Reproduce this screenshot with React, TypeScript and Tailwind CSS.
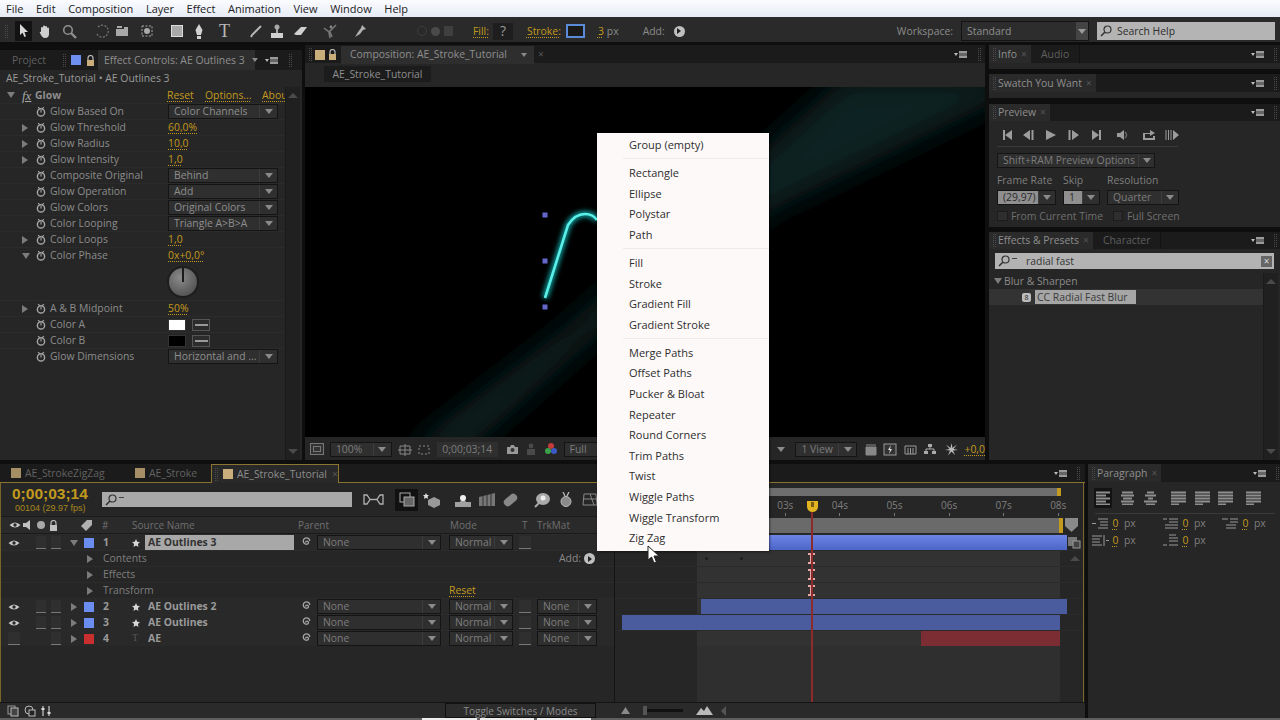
import type { ReactNode } from "react";

const GOLD = "text-[#c29a1e] underline decoration-dotted underline-offset-2";

function Ic({ w = 14, h = 14, className = "", children }: { w?: number; h?: number; className?: string; children: ReactNode }) {
  return (
    <svg viewBox={`0 0 ${w} ${h}`} width={w} height={h} className={`shrink-0 ${className}`}>
      {children}
    </svg>
  );
}

function Grip({ className = "" }: { className?: string }) {
  return <div className={`w-[3px] h-[13px] shrink-0 border-x border-dotted border-[#4a4a4a] ${className}`} />;
}

function PanelMenu() {
  return (
    <div className="flex items-center gap-[1px] shrink-0">
      <div className="w-0 h-0 border-x-[2px] border-x-transparent border-t-[3px] border-t-[#bbb]" />
      <div className="w-[8px] h-[7px] border-y-2 border-[#9a9a9a] bg-[#666]" />
    </div>
  );
}

function Arrow({ open = false, className = "" }: { open?: boolean; className?: string }) {
  return open ? (
    <div className={`w-0 h-0 border-x-[4px] border-x-transparent border-t-[6px] border-t-[#7c7c7c] ${className}`} />
  ) : (
    <div className={`w-0 h-0 border-y-[4px] border-y-transparent border-l-[6px] border-l-[#7c7c7c] ${className}`} />
  );
}

function Drop({ label, w, arrowW = 18, dim = false, fill = 0 }: { label: string; w: number; arrowW?: number; dim?: boolean; fill?: number }) {
  return (
    <div
      className={`h-[15px] flex items-center shrink-0 border border-[#141414] bg-[#2f2f2f] ${dim ? "text-[#7d7d7d]" : "text-[#8e8e8e]"}`}
      style={{ width: w }}
    >
      <div
        className="flex-1 min-w-0 h-full pl-[5px] flex items-center whitespace-nowrap overflow-hidden leading-none"
        style={fill ? { background: `linear-gradient(to right,#8f8f8f ${fill}px,transparent ${fill}px)`, color: "#2a2a2a" } : undefined}
      >
        {label}
      </div>
      <div className="flex justify-center items-center h-full border-l border-[#3c3c3c]" style={{ width: arrowW }}>
        <div className="w-0 h-0 border-x-[4px] border-x-transparent border-t-[5px] border-t-[#8a8a8a]" />
      </div>
    </div>
  );
}

function Stopwatch() {
  return (
    <Ic w={10} h={11}>
      <circle cx="5" cy="6.4" r="3.6" fill="none" stroke="#a5a5a5" strokeWidth="1.4" />
      <path d="M2 1.2 L4 2.6 M8 1.2 L6 2.6 M5 6.4 L5 4" stroke="#a5a5a5" strokeWidth="1.1" />
    </Ic>
  );
}

type FxRow = {
  label: string;
  arrow?: boolean;
  open?: boolean;
  drop?: string;
  val?: string;
  swatch?: string;
};

const FX_ROWS: FxRow[] = [
  { label: "Glow Based On", drop: "Color Channels" },
  { label: "Glow Threshold", arrow: true, val: "60,0%" },
  { label: "Glow Radius", arrow: true, val: "10,0" },
  { label: "Glow Intensity", arrow: true, val: "1,0" },
  { label: "Composite Original", drop: "Behind" },
  { label: "Glow Operation", drop: "Add" },
  { label: "Glow Colors", drop: "Original Colors" },
  { label: "Color Looping", drop: "Triangle A>B>A" },
  { label: "Color Loops", arrow: true, val: "1,0" },
  { label: "Color Phase", arrow: true, open: true, val: "0x+0,0°" },
  { label: "A & B Midpoint", arrow: true, val: "50%" },
  { label: "Color A", swatch: "#ffffff" },
  { label: "Color B", swatch: "#000000" },
  { label: "Glow Dimensions", drop: "Horizontal and ..." },
];

function EffectRow({ r }: { r: FxRow }) {
  return (
    <>
      <div className="h-[16px] flex items-center border-t border-[#2b2b2b]">
        <div className="w-[36px] pl-[22px] shrink-0 flex items-center">{r.arrow && <Arrow open={r.open} />}</div>
        <div className="w-[14px] shrink-0 flex items-center">
          <Stopwatch />
        </div>
        <div className="w-[118px] shrink-0 text-[#8c8c8c] whitespace-nowrap leading-none">{r.label}</div>
        {r.drop && <Drop label={r.drop} w={110} />}
        {r.val && <span className={`${GOLD} leading-none`}>{r.val}</span>}
        {r.swatch && (
          <div className="flex items-center gap-[6px]">
            <div className="w-[18px] h-[12px] border border-[#333]" style={{ background: r.swatch }} />
            <div className="w-[18px] h-[12px] border border-[#555] bg-[#2c2c2c] flex items-center justify-center">
              <div className="w-[13px] h-[2px] bg-[#999]" />
            </div>
          </div>
        )}
      </div>
      {r.open && (
        <div className="h-[37px] flex items-center pl-[167px]">
          <div className="w-[32px] h-[32px] rounded-full border-2 border-[#1d1d1d] bg-[radial-gradient(circle_at_40%_35%,#8a8a8a,#555_75%)] flex justify-center">
            <div className="w-[2px] h-[14px] bg-[#1a1a1a]" />
          </div>
        </div>
      )}
    </>
  );
}

function EffectControls() {
  return (
    <div className="w-[302px] h-[410px] bg-[#262626] flex flex-col shrink-0 mt-[8px]">
      <div className="h-[20px] bg-[#1b1b1b] flex items-center shrink-0">
        <span className="ml-[12px] w-[51px] text-[#5f5f5f] leading-none">Project</span>
        <Grip />
        <div className="w-[10px] h-[10px] bg-[#6f8ff0] ml-[5px]" />
        <Ic w={9} h={11} className="ml-[5px]">
          <path d="M2 5 V3 a2.5 2.5 0 0 1 5 0 V5" fill="none" stroke="#bbb" strokeWidth="1.2" />
          <rect x="1" y="5" width="7" height="6" fill="#c9ad7a" />
        </Ic>
        <div className="ml-[3px] h-[20px] w-[157px] bg-[#2e2e2e] flex items-center pl-[6px] text-[#8e8e8e] whitespace-nowrap leading-none">
          Effect Controls: AE Outlines 3
          <div className="ml-[7px] w-0 h-0 border-x-[3px] border-x-transparent border-t-[4px] border-t-[#8a8a8a]" />
        </div>
        <div className="ml-[10px]">
          <PanelMenu />
        </div>
        <Grip className="ml-[11px]" />
      </div>
      <div className="h-[17px] pb-[1px] flex items-center pl-[6px] text-[#9a9a9a] leading-none whitespace-nowrap">
        AE_Stroke_Tutorial • AE Outlines 3
      </div>
      <div className="flex-1 flex min-h-0">
        <div className="flex-1 min-w-0">
          <div className="h-[16px] flex items-center">
            <div className="w-[22px] pl-[7px] shrink-0">
              <Arrow open />
            </div>
            <span className="w-[13px] italic font-['Liberation_Serif',serif] text-[13px] text-[#a8a8a8] underline leading-none">fx</span>
            <span className="w-[132px] font-bold text-[#8e8e8e] leading-none">Glow</span>
            <span className={`${GOLD} w-[38px] leading-none`}>Reset</span>
            <span className={`${GOLD} w-[57px] leading-none whitespace-nowrap`}>Options...</span>
            <span className={`${GOLD} leading-none w-[22px]`}>Abou</span>
          </div>
          {FX_ROWS.map((r) => (
            <EffectRow key={r.label} r={r} />
          ))}
        </div>
        <ScrollBar />
      </div>
    </div>
  );
}

function ScrollBar() {
  return (
    <div className="w-[15px] mr-[2px] shrink-0 bg-[#202020] border-l border-[#1a1a1a] flex flex-col items-center justify-between py-[6px]">
      <div className="w-0 h-0 border-x-[5px] border-x-transparent border-b-[5px] border-b-[#4a4a4a]" />
      <div className="w-0 h-0 border-x-[5px] border-x-transparent border-t-[5px] border-t-[#4a4a4a]" />
    </div>
  );
}

function Viewer() {
  return (
    <svg viewBox="0 0 680 350" width={680} height={350} className="block bg-black shrink-0">
      <defs>
        <filter id="soft" x="-20%" y="-20%" width="140%" height="140%">
          <feGaussianBlur stdDeviation="14" />
        </filter>
        <filter id="glow" x="-50%" y="-50%" width="200%" height="200%">
          <feGaussianBlur stdDeviation="2.5" />
        </filter>
      </defs>
      <path d="M100 365 L258 243 L540 -10 L700 -10 L700 10 L470 122 L295 245 L160 365 Z" fill="#0a2223" filter="url(#soft)" />
      <path d="M240 211 L263 138 Q270 127 280 127 Q288 127 292 133" fill="none" stroke="#19c8c8" strokeWidth="6" filter="url(#glow)" opacity="0.8" />
      <path d="M240 211 L263 138 Q270 127 280 127 Q288 127 292 133" fill="none" stroke="#5af0e8" strokeWidth="2.6" />
      {[128, 174, 220].map((y) => (
        <rect key={y} x={237.5} y={y - 2.5} width={5} height={5} fill="#6466cc" />
      ))}
    </svg>
  );
}

function CompFooter() {
  return (
    <div className="h-[18px] mt-[3px] flex items-center text-[#777] leading-none">
      <div className="ml-[5px] w-[14px] h-[12px] border border-[#777] bg-[#333] flex items-center justify-center">
        <div className="w-[8px] h-[6px] border border-[#777]" />
      </div>
      <div className="ml-[6px]">
        <Drop label="100%" w={62} dim />
      </div>
      <Ic w={14} h={13} className="ml-[6px]">
        <path d="M2 3 H12 V11 H2 Z M7 1 V13 M0 7 H14" fill="none" stroke="#888" />
      </Ic>
      <Ic w={14} h={13} className="ml-[5px]">
        <path d="M2 3 H12 V11 H2 Z" fill="none" stroke="#888" strokeDasharray="2 2" />
      </Ic>
      <div className="ml-[6px] w-[61px] h-[15px] bg-[#2f2f2f] flex items-center justify-center text-[#7d7d7d]">0;00;03;14</div>
      <Ic w={13} h={11} className="ml-[8px]">
        <path d="M1 3 H4 L5 1 H8 L9 3 H12 V10 H1 Z" fill="#999" />
        <circle cx="6.5" cy="6" r="2" fill="#333" />
      </Ic>
      <Ic w={10} h={12} className="ml-[7px]">
        <circle cx="5" cy="3" r="2.4" fill="#4a4a4a" />
        <rect x="1" y="6" width="8" height="6" fill="#4a4a4a" />
      </Ic>
      <Ic w={14} h={14} className="ml-[8px]">
        <circle cx="7" cy="4" r="3" fill="#c63a3a" />
        <circle cx="4" cy="9" r="3" fill="#3aa04a" />
        <circle cx="10" cy="9" r="3" fill="#3a5ac6" />
      </Ic>
      <div className="ml-[6px]">
        <Drop label="Full" w={60} dim />
      </div>
      <div className="w-[143px]" />
      <div className="w-[30px] flex justify-center">
        <div className="w-0 h-0 border-x-[4px] border-x-transparent border-t-[5px] border-t-[#8a8a8a]" />
      </div>
      <Drop label="1 View" w={62} dim />
      <Ic w={14} h={13} className="ml-[7px]">
        <path d="M2 2 H12 M2 4 H12 V12 H2 Z" fill="#888" stroke="#888" />
      </Ic>
      <Ic w={14} h={13} className="ml-[5px]">
        <rect x="1" y="1" width="12" height="11" fill="#333" stroke="#999" />
        <path d="M8 2 L5 7 H7 L6 11 L9 6 H7 Z" fill="#ddd" />
      </Ic>
      <Ic w={13} h={12} className="ml-[7px]">
        <path d="M1 3 H12 V11 H1 Z M4 5 V11 M6.5 5 V11 M9 5 V11" fill="none" stroke="#999" />
      </Ic>
      <Ic w={14} h={12} className="ml-[6px]">
        <path d="M5 1 H9 V4 H5 Z M1 8 H5 V11 H1 Z M9 8 H13 V11 H9 Z" fill="#aaa" />
        <path d="M7 4 V6 M3 8 V6 H11 V8" fill="none" stroke="#aaa" />
      </Ic>
      <Ic w={15} h={15} className="ml-[7px]">
        <path d="M7.5 1 L8.5 6 L13 2.5 L9.5 7 L14 8 L9 8.5 L11 13 L7.5 9.5 L4 13.5 L6 8.5 L1 8 L5.5 7 L2 2.5 L6.5 6 Z" fill="#bbb" />
      </Ic>
      <span className={`ml-[5px] ${GOLD}`}>+0,0</span>
    </div>
  );
}

function CompPanel() {
  return (
    <div className="ml-[3px] w-[680px] h-[415px] shrink-0 mt-[3px] bg-[#262626] flex flex-col">
      <div className="h-[18px] pt-[1px] bg-[#1b1b1b] flex items-center shrink-0">
        <Grip className="ml-[4px]" />
        <div className="w-[10px] h-[10px] bg-[#c9ad7a] ml-[3px]" />
        <Ic w={9} h={11} className="ml-[3px]">
          <path d="M2 5 V3 a2.5 2.5 0 0 1 5 0 V5" fill="none" stroke="#bbb" strokeWidth="1.2" />
          <rect x="1" y="5" width="7" height="6" fill="#c9ad7a" />
        </Ic>
        <div className="ml-[4px] h-[18px] w-[193px] bg-[#2e2e2e] flex items-center pl-[9px] text-[#8e8e8e] leading-none whitespace-nowrap">
          Composition: AE_Stroke_Tutorial
          <div className="ml-[14px] w-0 h-0 border-x-[3px] border-x-transparent border-t-[4px] border-t-[#8a8a8a]" />
        </div>
        <span className="ml-[4px] text-[#555] leading-none">×</span>
        <div className="flex-1" />
        <PanelMenu />
        <Grip className="ml-[11px] mr-[4px]" />
      </div>
      <div className="h-[24px] flex items-start pt-[3px] pl-[19px] shrink-0">
        <div className="h-[16px] w-[107px] bg-[#1c1c1c] flex items-center justify-center text-[#8e8e8e] leading-none">AE_Stroke_Tutorial</div>
      </div>
      <Viewer />
      <CompFooter />
    </div>
  );
}

function Tab({ label, active = true }: { label: string; active?: boolean }) {
  return (
    <div className={`h-full flex items-center px-[4px] leading-none whitespace-nowrap ${active ? "bg-[#2a2a2a] text-[#8e8e8e]" : "text-[#5f5f5f] pl-[10px] pr-[10px] border-r border-[#111]"}`}>
      {active && <Grip className="mr-[2px]" />}
      {label}
      {active && <span className="ml-[4px] text-[#555]">×</span>}
    </div>
  );
}

function TabBar({ children, h = 18 }: { children: ReactNode; h?: number }) {
  return (
    <div className="bg-[#1b1b1b] flex items-center shrink-0" style={{ height: h }}>
      {children}
      <div className="flex-1" />
      <PanelMenu />
      <Grip className="ml-[10px] mr-[3px]" />
    </div>
  );
}

function PreviewButtons() {
  const c = "#9c9c9c";
  return (
    <div className="h-[20px] flex items-center ml-[8px] w-[181px]">
      <Ic w={11} h={10} className="ml-[5px]">
        <path d="M1 0 H3 V10 H1 Z M10 0 V10 L3 5 Z" fill={c} />
      </Ic>
      <Ic w={12} h={10} className="ml-[9px]">
        <path d="M8 0 V10 L1 5 Z M9.5 0 H11.5 V10 H9.5 Z" fill={c} />
      </Ic>
      <Ic w={10} h={10} className="ml-[12px]">
        <path d="M0 0 L10 5 L0 10 Z" fill={c} />
      </Ic>
      <Ic w={12} h={10} className="ml-[12px]">
        <path d="M0.5 0 H2.5 V10 H0.5 Z M4 0 L11 5 L4 10 Z" fill={c} />
      </Ic>
      <Ic w={11} h={10} className="ml-[11px]">
        <path d="M1 0 L8 5 L1 10 Z M8 0 H10 V10 H8 Z" fill={c} />
      </Ic>
      <Ic w={13} h={12} className="ml-[14px]">
        <path d="M1 4 H4 L8 1 V11 L4 8 H1 Z" fill={c} />
        <path d="M9 3 Q12 6 9 9" fill="none" stroke="#666" strokeWidth="1.5" />
      </Ic>
      <Ic w={14} h={12} className="ml-[13px]">
        <path d="M1 4 H8 V1 L13 4 L8 7 V5 H3 V9 H11 V7 H13 V11 H1 Z" fill={c} />
      </Ic>
      <Ic w={14} h={10} className="ml-[9px]">
        <path d="M0.5 0 H1.5 V10 H0.5 Z M3 0 H4 V10 H3 Z M5.5 0 H6.5 V10 H5.5 Z M8 0 L14 5 L8 10 Z" fill={c} />
      </Ic>
    </div>
  );
}

function PreviewPanel() {
  return (
    <div className="h-[123px] mt-[6px] bg-[#262626] flex flex-col text-[#8a8a8a]">
      <TabBar h={17}>
        <Tab label="Preview" />
      </TabBar>
      <div className="mt-[4px]">
        <PreviewButtons />
      </div>
      <div className="ml-[8px] w-[181px] h-[1px] bg-[#3a3a3a] mt-[1px]" />
      <div className="mt-[6px] ml-[8px]">
        <Drop label="Shift+RAM Preview Options" w={158} arrowW={16} dim />
      </div>
      <div className="flex ml-[8px] mt-[5px] h-[14px] items-center leading-none text-[#7f7f7f]">
        <span className="w-[66px]">Frame Rate</span>
        <span className="w-[44px]">Skip</span>
        <span>Resolution</span>
      </div>
      <div className="flex ml-[8px] mt-[3px] items-center">
        <Drop label="(29,97)" w={59} arrowW={17} fill={41} />
        <div className="ml-[7px]">
          <Drop label="1" w={37} arrowW={17} fill={19} />
        </div>
        <div className="ml-[7px]">
          <Drop label="Quarter" w={72} arrowW={17} dim />
        </div>
      </div>
      <div className="flex ml-[8px] mt-[4px] h-[14px] items-center leading-none text-[#6f6f6f]">
        <div className="w-[11px] h-[10px] bg-[#2e2e2e] border border-[#1c1c1c]" />
        <span className="ml-[3px] w-[102px]">From Current Time</span>
        <div className="w-[10px] h-[10px] bg-[#2e2e2e] border border-[#1c1c1c]" />
        <span className="ml-[4px]">Full Screen</span>
      </div>
    </div>
  );
}

function SearchGlyph() {
  return (
    <Ic w={12} h={12}>
      <circle cx="7.5" cy="4.5" r="3.5" fill="none" stroke="#333" strokeWidth="1.2" />
      <path d="M5 7 L1 11" stroke="#333" strokeWidth="1.6" />
    </Ic>
  );
}

function EffectsPanel() {
  return (
    <div className="flex-1 mt-[5px] bg-[#262626] flex flex-col text-[#8a8a8a]">
      <TabBar h={17}>
        <Tab label="Effects & Presets" />
        <Tab label="Character" active={false} />
      </TabBar>
      <div className="mx-[6px] mt-[4px] h-[16px] bg-[#b3b3b3] flex items-center pl-[3px] pr-[2px] text-[#333] leading-none">
        <SearchGlyph />
        <div className="ml-[2px] w-[5px] h-[1px] bg-[#444] mb-[5px]" />
        <span className="ml-[9px]">radial fast</span>
        <div className="flex-1" />
        <div className="w-[11px] h-[11px] bg-[#666] text-[#ddd] flex items-center justify-center text-[10px]">×</div>
      </div>
      <div className="flex-1 flex min-h-0 mt-[4px]">
        <div className="flex-1 min-w-0">
          <div className="h-[16px] flex items-center pl-[5px] leading-none">
            <Arrow open className="mr-[2px]" />
            Blur &amp; Sharpen
          </div>
          <div className="h-[16px] flex items-center bg-[#333] pl-[33px] leading-none">
            <div className="w-[9px] h-[9px] rounded-[2px] bg-[#bbb] flex items-center justify-center text-[7px] text-[#222]">8</div>
            <div className="ml-[4px] h-[14px] w-[101px] bg-[#a6a6a6] flex items-center pl-[2px] text-[#3a3a3a]">CC Radial Fast Blur</div>
          </div>
        </div>
        <ScrollBar />
      </div>
    </div>
  );
}

function RightColumn() {
  return (
    <div className="ml-[4px] flex-1 flex flex-col mt-[3px] h-[415px]">
      <div className="h-[24px] bg-[#262626]">
        <TabBar>
          <Tab label="Info" />
          <Tab label="Audio" active={false} />
        </TabBar>
      </div>
      <div className="h-[24px] mt-[5px] bg-[#262626]">
        <TabBar>
          <Tab label="Swatch You Want" />
        </TabBar>
      </div>
      <PreviewPanel />
      <EffectsPanel />
    </div>
  );
}

function Toolbar() {
  const s = "#b5b5b5";
  return (
    <div className="h-[25px] pt-[3px] bg-[#2a2a2a] flex items-center text-[#8a8a8a] leading-none shrink-0">
      <Grip className="ml-[5px]" />
      <div className="ml-[7px] w-[17px] h-[20px] bg-[#131313] flex items-center justify-center">
        <Ic w={10} h={14}>
          <path d="M1 0 L1 11 L3.6 8.8 L5.4 13 L7 12.2 L5.4 8 L9 8 Z" fill="#d8d8d8" />
        </Ic>
      </div>
      <Ic w={14} h={15} className="ml-[6px]">
        <path d="M3 8 V4 a1 1 0 0 1 2 0 V2.5 a1 1 0 0 1 2 0 V3 a1 1 0 0 1 2 0 V4.5 a1 1 0 0 1 2 0 V10 Q11 14 7 14 Q4 14 2 9 Q1 7 3 8 Z" fill="#cfcfcf" />
      </Ic>
      <Ic w={15} h={15} className="ml-[10px]">
        <circle cx="6" cy="6" r="4.3" fill="none" stroke="#8f8f8f" strokeWidth="1.6" />
        <path d="M9 9 L14 14" stroke="#8f8f8f" strokeWidth="2.4" />
      </Ic>
      <Ic w={14} h={14} className="ml-[18px]">
        <path d="M3 3 A6 6 0 1 1 2 10" fill="none" stroke="#777" strokeWidth="1.2" strokeDasharray="2 1.4" />
      </Ic>
      <Ic w={14} h={12} className="ml-[6px]">
        <path d="M1 4 H9 V2 H13 V11 H1 Z" fill="#a8a8a8" />
        <rect x="2" y="1" width="5" height="2" fill="#a8a8a8" />
      </Ic>
      <Ic w={14} h={14} className="ml-[11px]">
        <rect x="2" y="2" width="10" height="10" fill="none" stroke="#aaa" strokeDasharray="2 1.5" />
        <circle cx="7" cy="7" r="3" fill="#aaa" />
      </Ic>
      <Ic w={12} h={13} className="ml-[17px]">
        <rect x="0.5" y="0.5" width="11" height="11" fill="#a9a9a9" stroke="#ddd" />
      </Ic>
      <Ic w={10} h={15} className="ml-[11px]">
        <path d="M5 0 L8.5 6 L7 11 H3 L1.5 6 Z" fill="#d2d2d2" />
        <rect x="3" y="12" width="4" height="3" fill="#d2d2d2" />
      </Ic>
      <span className="ml-[15px] w-[16px] font-['Liberation_Serif',serif] text-[18px] text-[#b8b8b8]">T</span>
      <Ic w={13} h={13} className="ml-[14px]">
        <path d="M12 1 L3 10 L2 12" stroke={s} strokeWidth="2" fill="none" />
      </Ic>
      <Ic w={14} h={15} className="ml-[8px]">
        <circle cx="7" cy="3" r="2.5" fill="#a8a8a8" />
        <rect x="6" y="5" width="2" height="4" fill="#a8a8a8" />
        <rect x="1" y="9" width="12" height="5" fill="#d0d0d0" />
      </Ic>
      <Ic w={15} h={11} className="ml-[9px]">
        <path d="M1 8 L8 1 H14 L8 9 H3 Z" fill="#d0d0d0" />
      </Ic>
      <Ic w={15} h={15} className="ml-[15px]">
        <path d="M7 14 L6 8 L1 4 M6 8 L11 3 L13 1 M7 8 L9 13" stroke="#777" strokeWidth="1.6" fill="none" />
        <circle cx="8" cy="3" r="1.4" fill="#888" />
      </Ic>
      <Ic w={14} h={15} className="ml-[15px]">
        <path d="M9 1 L13 5 L10 6 L7 10 L2 13 L5 8 L8 4 Z" fill="#b0b0b0" />
      </Ic>
      <div className="ml-[50px] flex items-center gap-[4px]">
        <div className="w-[10px] h-[10px] rounded-full border border-[#3d3d3d]" />
        <div className="w-[9px] h-[9px] rounded-full bg-[#4a4a4a]" />
        <div className="w-[9px] h-[10px] bg-[#3f3f3f]" />
      </div>
      <span className={`ml-[20px] ${GOLD}`}>Fill:</span>
      <div className="ml-[4px] w-[20px] h-[17px] bg-[#1e1e1e] flex items-center justify-center text-[14px] text-[#999]">?</div>
      <span className={`ml-[14px] ${GOLD}`}>Stroke:</span>
      <div className="ml-[5px] w-[19px] h-[14px] border-2 border-[#5a8ad8] bg-[#1a1a1a]" />
      <span className={`ml-[13px] ${GOLD}`}>3</span>
      <span className="ml-[3px] text-[#8a8a8a]">px</span>
      <span className="ml-[24px] text-[#8a8a8a] w-[31px]">Add:</span>
      <div className="w-[11px] h-[11px] rounded-full bg-[#c0c0c0] flex items-center justify-center">
        <div className="w-0 h-0 border-y-[3px] border-y-transparent border-l-[4px] border-l-[#222]" />
      </div>
      <div className="flex-1" />
      <span className="text-[#8a8a8a]">Workspace:</span>
      <div className="ml-[8px]">
        <div className="w-[128px] h-[20px] bg-[#2d2d2d] border border-[#141414] flex items-center text-[#8e8e8e] pl-[5px]">
          Standard
          <div className="flex-1" />
          <div className="w-[12px] h-full bg-[#444] flex items-center justify-center">
            <div className="w-0 h-0 border-x-[4px] border-x-transparent border-t-[5px] border-t-[#999]" />
          </div>
        </div>
      </div>
      <div className="ml-[8px] mr-[5px] w-[178px] h-[18px] bg-[#b4b4b4] flex items-center pl-[3px] text-[#2c2c2c]">
        <SearchGlyph />
        <span className="ml-[5px]">Search Help</span>
      </div>
    </div>
  );
}

type Layer = { n: number; name: string; color: string; sel?: boolean; eye?: boolean; shape?: boolean };

function Eye() {
  return (
    <Ic w={12} h={8}>
      <path d="M0.5 4 Q6 -1 11.5 4 Q6 9 0.5 4 Z" fill="#c8c8c8" />
      <circle cx="6" cy="4" r="1.7" fill="#2a2a2a" />
    </Ic>
  );
}

function Spiral() {
  return (
    <Ic w={11} h={11}>
      <path d="M5.5 5.5 a1.5 1.5 0 1 1 1.8 1.6 a3.2 3.2 0 1 1 2.4 -3.2" fill="none" stroke="#a8a8a8" strokeWidth="1.3" />
    </Ic>
  );
}

function Switch({ w = 10 }: { w?: number }) {
  return <div className="h-[13px] bg-[#2f2f2f] border-b border-[#777] shrink-0" style={{ width: w }} />;
}

function LayerRow({ l }: { l: Layer }) {
  return (
    <div className="h-[16px] flex items-center border-t border-[#2b2b2b] bg-[#292929] leading-none">
      <div className="w-[35px] pl-[7px] shrink-0 flex items-center">{l.eye ? <Eye /> : <Switch w={12} />}</div>
      {l.eye ? <Switch /> : <div className="w-[10px]" />}
      <div className="w-[5px]" />
      <Switch />
      <div className="ml-[7px] w-[12px] flex justify-center">
        <Arrow open={l.sel} />
      </div>
      <div className="w-[10px] h-[10px] shrink-0 ml-[4px]" style={{ background: l.color }} />
      <div className="w-[19px] ml-[2px] pl-[7px] font-bold text-[#9a9a9a] shrink-0">{l.n}</div>
      <div className="w-[30px] pl-[17px] flex shrink-0">
        {l.shape ? (
          <Ic w={8} h={8}>
            <path d="M4 0 L5.2 2.8 L8 3 L5.9 5 L6.5 8 L4 6.4 L1.5 8 L2.1 5 L0 3 L2.8 2.8 Z" fill="#d8d8d8" />
          </Ic>
        ) : (
          <span className="text-[#555] font-['Liberation_Serif',serif]">T</span>
        )}
      </div>
      <div className={`w-[149px] h-[15px] flex items-center pl-[3px] font-bold shrink-0 ${l.sel ? "bg-[#a8a8a8] text-[#333]" : "text-[#9a9a9a]"}`}>{l.name}</div>
      <div className="w-[23px] flex justify-center shrink-0">
        <Spiral />
      </div>
      <Drop label="None" w={124} dim />
      <div className="ml-[8px]">
        <Drop label="Normal" w={64} dim />
      </div>
      <div className="ml-[6px]">
        <Switch w={12} />
      </div>
      {!l.sel && (
        <div className="ml-[6px]">
          <Drop label="None" w={60} dim />
        </div>
      )}
    </div>
  );
}

const LAYERS: Layer[] = [
  { n: 2, name: "AE Outlines 2", color: "#6b8df0", eye: true, shape: true },
  { n: 3, name: "AE Outlines", color: "#6b8df0", eye: true, shape: true },
  { n: 4, name: "AE", color: "#c83030" },
];

function Sub({ label, extra }: { label: string; extra?: ReactNode }) {
  return (
    <div className="h-[16px] flex items-center border-t border-[#2b2b2b] leading-none text-[#7f7f7f]">
      <div className="w-[102px] pl-[86px] shrink-0">
        <Arrow />
      </div>
      <span className="w-[346px] shrink-0">{label}</span>
      {extra}
    </div>
  );
}

function TimelineHeader() {
  const c = "#b0b0b0";
  return (
    <div className="h-[33px] flex items-center bg-[#262626]">
      <div className="w-[101px] pl-[11px] shrink-0 font-['Liberation_Sans',sans-serif]">
        <div className="text-[15.5px] font-bold text-[#c29a1e] leading-[18px]">0;00;03;14</div>
        <div className="text-[9px] text-[#a8881e] leading-[11px] pl-[3px] whitespace-nowrap">00104 (29.97 fps)</div>
      </div>
      <div className="w-[250px] h-[15px] bg-[#a9a9a9] flex items-center pl-[3px]">
        <SearchGlyph />
        <div className="ml-[2px] w-[5px] h-[1px] bg-[#444] mb-[5px]" />
      </div>
      <Ic w={24} h={13} className="ml-[11px]">
        <path d="M1 2 H4 L7 6.5 L4 11 H1 Z M17 2 H20 V11 H17 L14 6.5 Z" fill="none" stroke={c} strokeWidth="1.3" />
        <path d="M7 6.5 H14" stroke={c} strokeWidth="1.4" />
      </Ic>
      <div className="ml-[8px] w-[23px] h-[22px] bg-[#111] flex items-center justify-center">
        <Ic w={16} h={15}>
          <rect x="1" y="1" width="10" height="9" fill="none" stroke="#aaa" />
          <rect x="5" y="5" width="10" height="9" fill="#666" stroke="#aaa" />
        </Ic>
      </div>
      <Ic w={18} h={16} className="ml-[5px]">
        <path d="M3 1 L4 3 L6 3 L4.6 4.6 L5 7 L3 5.8 L1 7 L1.4 4.6 L0 3 L2 3 Z" fill="#ddd" />
        <path d="M11 5 L17 8 V13 L11 16 L5 13 V8 Z" fill="#999" />
      </Ic>
      <Ic w={18} h={14} className="ml-[13px]">
        <path d="M1 9 H6 L9 3 L12 9 H17 V14 H1 Z" fill="#a0a0a0" />
        <circle cx="9" cy="5" r="3" fill="#eee" />
      </Ic>
      <Ic w={18} h={15} className="ml-[6px]">
        <path d="M1 5 L17 1 V14 L1 14 Z" fill="#777" />
        <path d="M5 4 V14 M9 3 V14 M13 2 V14" stroke="#333" />
      </Ic>
      <Ic w={17} h={16} className="ml-[6px]">
        <rect x="1" y="4" width="15" height="8" rx="4" fill="#888" transform="rotate(-40 8.5 8)" />
      </Ic>
      <Ic w={18} h={16} className="ml-[14px]">
        <ellipse cx="10" cy="7" rx="7" ry="6" fill="#aaa" />
        <circle cx="10" cy="6" r="2.5" fill="#eee" />
        <path d="M2 15 L6 11" stroke="#aaa" strokeWidth="2" />
      </Ic>
      <Ic w={14} h={16} className="ml-[8px]">
        <circle cx="7" cy="9.5" r="5" fill="#8a8a8a" stroke="#bbb" />
        <path d="M4 0 L6 4 M10 0 L8 4" stroke="#bbb" strokeWidth="1.3" />
      </Ic>
      <Ic w={16} h={14} className="ml-[9px]">
        <path d="M2 1 H14 L15 12 H1 Z M1 6 H15 M8 1 L12 12" fill="none" stroke="#888" />
      </Ic>
    </div>
  );
}

function ColumnHeaders() {
  return (
    <div className="h-[18px] flex items-center bg-[#2a2a2a] text-[10px] text-[#6f6f6f] leading-none border-y border-[#1a1a1a]">
      <div className="w-[62px] pl-[8px] flex items-center gap-[2px] shrink-0">
        <Eye />
        <Ic w={10} h={10}>
          <path d="M0 3 H3 L7 0 V10 L3 7 H0 Z" fill="#c0c0c0" />
        </Ic>
        <div className="w-[8px] h-[8px] rounded-full bg-[#a8a8a8] mx-[2px]" />
        <Ic w={9} h={11}>
          <path d="M2 5 V3 a2.5 2.5 0 0 1 5 0 V5" fill="none" stroke="#bbb" strokeWidth="1.2" />
          <rect x="1" y="5" width="7" height="6" fill="#c0c0c0" />
        </Ic>
      </div>
      <Ic w={13} h={11} className="ml-[17px]">
        <path d="M1 6 L7 0 H12 V5 L6 11 Z" fill="#b0b0b0" />
      </Ic>
      <span className="ml-[9px] w-[30px]">#</span>
      <span className="w-[166px]">Source Name</span>
      <span className="w-[152px]">Parent</span>
      <span className="w-[72px]">Mode</span>
      <span className="w-[15px]">T</span>
      <span>TrkMat</span>
    </div>
  );
}

function TimelineLeft() {
  return (
    <div className="w-[614px] shrink-0 flex flex-col border-r border-[#141414] bg-[#262626]">
      <TimelineHeader />
      <ColumnHeaders />
      <LayerRow l={{ n: 1, name: "AE Outlines 3", color: "#6b8df0", eye: true, sel: true, shape: true }} />
      <Sub
        label="Contents"
        extra={
          <div className="flex items-center w-[150px] justify-end text-[#8a8a8a] pr-[4px]">
            Add:
            <div className="ml-[3px] w-[11px] h-[11px] rounded-full bg-[#c0c0c0] flex items-center justify-center">
              <div className="w-0 h-0 border-y-[3px] border-y-transparent border-l-[4px] border-l-[#222]" />
            </div>
          </div>
        }
      />
      <Sub label="Effects" />
      <Sub label="Transform" extra={<span className={GOLD}>Reset</span>} />
      {LAYERS.map((l) => (
        <LayerRow key={l.n} l={l} />
      ))}
      <div className="flex-1" />
    </div>
  );
}

function Keyframe() {
  return (
    <div className="w-[7px] h-[11px] flex flex-col items-center">
      <div className="w-[7px] h-[2px] bg-[#e8a8a8]" />
      <div className="w-[3px] flex-1 bg-[#e8a8a8]" />
      <div className="w-[7px] h-[2px] bg-[#e8a8a8]" />
    </div>
  );
}

const TRACK = "h-[16px] flex items-center bg-[linear-gradient(to_right,#262626_82px,#323232_82px,#323232_445px,#262626_445px)] border-t border-[#2a2a2a]";

function TimelineRight() {
  return (
    <div className="flex-1 relative flex flex-col min-w-0 bg-[#262626]">
      <div className="h-[33px] flex flex-col">
        <div className="h-[8px] mt-[5px] ml-[82px] mr-[22px] bg-[#6e6e6e] border-r-4 border-[#c29a1e]" />
        <div className="flex ml-[143px] h-[20px] text-[10px] text-[#7f7f7f] leading-none items-center">
          {["03s", "04s", "05s", "06s", "07s", "08s"].map((t) => (
            <div key={t} className="w-[54.6px] shrink-0 flex flex-col items-center gap-[3px] mt-[4px]">
              {t}
              <div className="w-[1px] h-[3px] bg-[#777]" />
            </div>
          ))}
        </div>
      </div>
      <div className="h-[18px] flex items-center">
        <div className="h-[15px] w-[366px] ml-[82px] bg-[#6a6a6a] border-r-4 border-[#c29a1e] shrink-0" />
        <Ic w={13} h={14} className="ml-[2px]">
          <path d="M0 0 H13 V8 L6.5 14 L0 8 Z" fill="#8a8a8a" />
        </Ic>
      </div>
      <div className={TRACK}>
        <div className="h-[15px] w-[452px] bg-[linear-gradient(to_bottom,#6c84e4,#4c66c8)]" />
        <Ic w={13} h={13} className="ml-[1px]">
          <rect x="0" y="1" width="9" height="9" fill="#777" />
          <rect x="5" y="5" width="7" height="7" fill="#444" stroke="#999" />
        </Ic>
      </div>
      <div className={TRACK}>
        <div className="flex ml-[90px] gap-[32px]">
          <div className="w-[3px] h-[3px] rounded-full bg-[#1c1c1c]" />
          <div className="w-[3px] h-[3px] rounded-full bg-[#1c1c1c]" />
        </div>
        <div className="ml-[64.5px]">
          <Keyframe />
        </div>
        <div className="ml-auto mr-[3px] w-0 h-0 border-x-[5px] border-x-transparent border-b-[5px] border-b-[#4a4a4a]" />
      </div>
      <div className={TRACK}>
        <div className="ml-[192.5px]">
          <Keyframe />
        </div>
      </div>
      <div className={TRACK}>
        <div className="ml-[192.5px]">
          <Keyframe />
        </div>
      </div>
      <div className={TRACK}>
        <div className="h-[15px] w-[366px] ml-[86px] bg-[#4a5c9e]" />
      </div>
      <div className={TRACK}>
        <div className="h-[15px] w-[438px] ml-[7px] bg-[#4a5c9e]" />
      </div>
      <div className={TRACK}>
        <div className="h-[15px] w-[139px] ml-[306px] bg-[#7c2c33]" />
      </div>
      <div className="flex-1 bg-[linear-gradient(to_right,#262626_82px,#2f2f2f_82px,#2f2f2f_445px,#262626_445px)]" />
      {/* playhead */}
      <div className="absolute left-[196px] top-[21px] bottom-0 w-[2px] bg-[#8e2a2a]" />
      <div className="absolute left-[191.5px] top-[18px] w-[11px] h-[11px] rounded-b-full bg-[#e2b422] flex justify-center">
        <div className="w-[3px] h-[5px] bg-[#7a5e10] mt-[1px]" />
      </div>
    </div>
  );
}

function BottomBar() {
  return (
    <div className="h-[16px] bg-[#2a2a2a] border-t border-[#141414] flex items-center text-[#8a8a8a] text-[10px] leading-none shrink-0">
      <Ic w={12} h={12} className="ml-[7px]">
        <rect x="1" y="1" width="7" height="8" fill="none" stroke="#999" />
        <rect x="4" y="3" width="7" height="8" fill="#444" stroke="#bbb" />
      </Ic>
      <Ic w={12} h={12} className="ml-[5px]">
        <circle cx="5" cy="5" r="4" fill="none" stroke="#bbb" />
        <rect x="5" y="5" width="6" height="6" fill="#222" stroke="#bbb" />
      </Ic>
      <Ic w={10} h={12} className="ml-[5px]">
        <path d="M2 1 V11 M8 1 V11" stroke="#aaa" strokeWidth="1.5" />
        <rect x="0.5" y="3" width="3" height="2" fill="#ddd" />
        <rect x="6.5" y="7" width="3" height="2" fill="#ddd" />
      </Ic>
      <div className="ml-[394px] w-[151px] h-[15px] bg-[#2c2c2c] border border-[#111] flex items-center justify-center shrink-0">Toggle Switches / Modes</div>
      <Ic w={9} h={7} className="ml-[25px]">
        <path d="M4.5 0 L9 7 H0 Z" fill="#8a8a8a" />
      </Ic>
      <div className="ml-[13px] w-[4px] h-[9px] bg-[#555]" />
      <div className="w-[36px] h-[3px] bg-[#111]" />
      <Ic w={17} h={9} className="ml-[13px]">
        <path d="M0 9 L5 2 L8 5 L11 0 L17 9 Z" fill="#bbb" />
      </Ic>
      <div className="ml-[8px] w-0 h-0 border-y-[5px] border-y-transparent border-r-[5px] border-r-[#555]" />
    </div>
  );
}

function CompTab({ label, active = false, w }: { label: string; active?: boolean; w: number }) {
  return (
    <div
      className={`h-[19px] flex items-center leading-none shrink-0 whitespace-nowrap ${active ? "border-x border-t border-[#8a7430] bg-[#292929] text-[#8e8e8e]" : "border-b border-[#8a7430] text-[#626262]"}`}
      style={{ width: w }}
    >
      {active && <Grip className="ml-[3px]" />}
      <div className={`w-[10px] h-[10px] bg-[#c9ad7a] ${active ? "ml-[5px]" : "ml-[11px] opacity-80"}`} />
      <span className="ml-[4px]">{label}</span>
      {active && <span className="ml-[5px] text-[#555]">×</span>}
    </div>
  );
}

function Timeline() {
  return (
    <div className="w-[1085px] flex flex-col shrink-0 bg-[#1b1b1b]">
      <div className="flex items-end shrink-0">
        <CompTab label="AE_StrokeZigZag" w={124} />
        <CompTab label="AE_Stroke" w={87} />
        <CompTab label="AE_Stroke_Tutorial" active w={128} />
        <div className="flex-1 h-[19px] border-b border-[#8a7430] flex items-center justify-end">
          <PanelMenu />
          <Grip className="ml-[10px] mr-[5px]" />
        </div>
      </div>
      <div className="flex-1 flex min-h-0 border-x border-[#7a6528] mr-[1px]">
        <TimelineLeft />
        <TimelineRight />
      </div>
      <BottomBar />
    </div>
  );
}

function AlignIcon({ kind }: { kind: string }) {
  const x: Record<string, number[]> = {
    l: [0, 0, 0, 0, 0],
    c: [2, 1, 3, 1, 2],
    r: [4, 2, 5, 1, 3],
    j: [0, 0, 0, 0, 0],
  };
  const off = x[kind];
  return (
    <Ic w={15} h={14}>
      {off.map((o, i) => (
        <rect key={i} x={o} y={i * 3 + 0.5} width={kind === "l" ? 14 - (i % 2) * 4 : kind === "j" ? (i === 4 ? 8 : 15) : 15 - o * 2} height={2} fill="#8f8f8f" />
      ))}
    </Ic>
  );
}

function Indent({ icon, w }: { icon: number; w: number }) {
  return (
    <div className="flex items-center shrink-0 leading-none" style={{ width: w }}>
      <Ic w={17} h={13}>
        {icon === 0 ? (
          <path d="M0 6.5 H4 M6 2 H16 M8 5 H16 M8 8 H16 M6 11 H16" stroke="#999" />
        ) : icon === 1 ? (
          <path d="M1 2 H5 M7 2 H16 M7 5 H16 M3 8 H16 M3 11 H16" stroke="#999" />
        ) : icon === 2 ? (
          <path d="M0 2 H6 M8 2 H16 M8 5 H16 M4 8 H14 M4 11 H14" stroke="#999" />
        ) : icon === 3 ? (
          <path d="M0 2 H10 M0 5 H8 M0 8 H8 M0 11 H10 M12 1 V12 M14 6.5 H17" stroke="#999" />
        ) : (
          <path d="M7 1 H14 M7 4 H16 M7 7 H16 M1 11 H5 M7 11 H16" stroke="#999" />
        )}
      </Ic>
      <span className={`ml-[2px] w-[9px] ${GOLD} text-center`}>0</span>
      <span className="ml-[4px] text-[#7f7f7f]">px</span>
    </div>
  );
}

function Paragraph() {
  return (
    <div className="ml-[3px] flex-1 bg-[#262626] flex flex-col">
      <TabBar>
        <Tab label="Paragraph" />
      </TabBar>
      <div className="flex items-center ml-[6px] mt-[6px] h-[20px]">
        <div className="w-[18px] h-[20px] bg-[#131313] flex items-center justify-center">
          <AlignIcon kind="l" />
        </div>
        <div className="ml-[8px]">
          <AlignIcon kind="c" />
        </div>
        <div className="ml-[8px]">
          <AlignIcon kind="r" />
        </div>
        <div className="ml-[13px]">
          <AlignIcon kind="j" />
        </div>
        <div className="ml-[9px]">
          <AlignIcon kind="j" />
        </div>
        <div className="ml-[8px]">
          <AlignIcon kind="j" />
        </div>
        <div className="ml-[13px]">
          <AlignIcon kind="j" />
        </div>
      </div>
      <div className="mx-[7px] mt-[5px] h-[1px] bg-[#3a3a3a]" />
      <div className="flex ml-[4px] mt-[1px] h-[16px] items-center">
        <Indent icon={0} w={70} />
        <Indent icon={1} w={60} />
        <Indent icon={2} w={60} />
      </div>
      <div className="flex ml-[4px] mt-[1px] h-[16px] items-center">
        <Indent icon={3} w={70} />
        <Indent icon={4} w={60} />
      </div>
    </div>
  );
}

const MENU: (string | null)[] = [
  "Group (empty)",
  null,
  "Rectangle",
  "Ellipse",
  "Polystar",
  "Path",
  null,
  "Fill",
  "Stroke",
  "Gradient Fill",
  "Gradient Stroke",
  null,
  "Merge Paths",
  "Offset Paths",
  "Pucker & Bloat",
  "Repeater",
  "Round Corners",
  "Trim Paths",
  "Twist",
  "Wiggle Paths",
  "Wiggle Transform",
  "Zig Zag",
];

function ContextMenu() {
  return (
    <div className="absolute left-[597px] top-[133px] w-[172px] h-[418px] bg-[#fdf9f9] pt-[1.5px] text-[11px] text-[#2e2e2e] shadow-[1px_1px_2px_rgba(0,0,0,.5)]">
      {MENU.map((m, i) =>
        m ? (
          <div key={m} className="h-[20.6px] flex items-center pl-[32px] leading-none">
            {m}
          </div>
        ) : (
          <div key={i} className="h-[7.4px] flex items-center pl-[26px]">
            <div className="h-[1px] w-full bg-[#efebeb]" />
          </div>
        ),
      )}
    </div>
  );
}

export default function App() {
  return (
    <div className="relative w-[1280px] h-[720px] overflow-hidden bg-[#0e0e0e] font-['Open_Sans','Liberation_Sans',sans-serif] text-[10.4px] flex flex-col">
      <div className="h-[17px] bg-[linear-gradient(to_bottom,#fbfcff,#e6ebf5)] flex items-center pl-[6px] gap-[12.6px] text-[11px] text-[#222] leading-none shrink-0">
        {["File", "Edit", "Composition", "Layer", "Effect", "Animation", "View", "Window", "Help"].map((m) => (
          <span key={m}>{m}</span>
        ))}
      </div>
      <Toolbar />
      <div className="h-[420px] flex shrink-0">
        <EffectControls />
        <CompPanel />
        <RightColumn />
      </div>
      <div className="h-[254px] mt-[2px] flex shrink-0">
        <Timeline />
        <Paragraph />
      </div>
      <div className="h-[2px] bg-[#5f5f5f] flex pl-[422px] gap-[3px] shrink-0">
        <div className="w-[55px] bg-[#eee]" />
        <div className="w-[54px] bg-[#eee]" />
        <div className="w-[54px] bg-[#eee]" />
      </div>
      <ContextMenu />
      <svg viewBox="0 0 14 20" width={14} height={20} className="absolute left-[647px] top-[545px]">
        <path d="M1 1 L1 15 L4.6 12 L7 18 L9.4 17 L7 11 L12 11 Z" fill="#fff" stroke="#222" strokeWidth="1" />
      </svg>
    </div>
  );
}
